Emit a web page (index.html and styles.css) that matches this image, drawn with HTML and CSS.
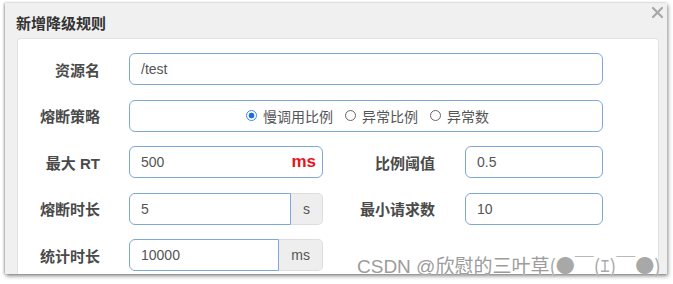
FILE: index.html
```html
<!DOCTYPE html>
<html lang="zh-CN">

<head>
    <meta charset="UTF-8">
    <meta name="viewport" content="width=device-width, initial-scale=1.0">
    <title>新增降级规则</title>
    <link rel="stylesheet" href="styles.css">
</head>

<body>
    <div class="modal">
        <div class="modal-header">
            <span class="modal-title">新增降级规则</span>
            <button class="close" type="button">
                <svg width="11" height="11" viewBox="0 0 11 11">
                    <path d="M1 1L10 10M10 1L1 10" stroke="#a8a8a8" stroke-width="2.2" stroke-linecap="square" fill="none" />
                </svg>
            </button>
        </div>
        <div class="modal-body">
            <div class="form-row">
                <label class="label">资源名</label>
                <input class="form-control field-full" value="/test">
            </div>
            <div class="form-row">
                <label class="label">熔断策略</label>
                <div class="form-control field-full radio-group">
                    <span class="radio checked"><i></i>慢调用比例</span>
                    <span class="radio"><i></i>异常比例</span>
                    <span class="radio"><i></i>异常数</span>
                </div>
            </div>
            <div class="form-row">
                <label class="label">最大 RT</label>
                <div class="form-control field-half with-suffix">
                    <input value="500">
                    <span class="suffix">ms</span>
                </div>
                <label class="label label-2">比例阈值</label>
                <input class="form-control field-small" value="0.5">
            </div>
            <div class="form-row">
                <label class="label">熔断时长</label>
                <div class="input-group field-half">
                    <input class="form-control" value="5">
                    <span class="addon">s</span>
                </div>
                <label class="label label-2">最小请求数</label>
                <input class="form-control field-small" value="10">
            </div>
            <div class="form-row">
                <label class="label">统计时长</label>
                <div class="input-group field-half">
                    <input class="form-control" value="10000">
                    <span class="addon">ms</span>
                </div>
            </div>
        </div>
    </div>
    <div class="watermark">CSDN @欣慰的三叶草<span class="kaomoji">(●￣(ｴ)￣●)</span></div>
</body>

</html>
```

FILE: styles.css
```css
* {
    margin: 0;
    padding: 0;
    box-sizing: border-box;
    font-family: 'Liberation Sans', 'Noto Sans CJK SC', sans-serif;
}

body {
    background: #fff;
    padding: 3px 0 0 5px;
    height: 284px;
    overflow: hidden;
}

.modal {
    width: 662px;
    height: 271px;
    background: #f0f0f0;
    box-shadow: 1px 2px 4px rgba(0, 0, 0, 0.45), -1px 0 2px rgba(0, 0, 0, 0.25);
    overflow: hidden;
    display: flex;
    flex-direction: column;
}

.modal-header {
    height: 35px;
    flex-shrink: 0;
    display: flex;
    align-items: flex-start;
    justify-content: space-between;
    padding: 13px 4px 0 11px;
}

.modal-title {
    font-size: 15px;
    font-weight: bold;
    color: #333;
    line-height: 16px;
}

.close {
    border: none;
    background: none;
    margin-top: -9px;
    line-height: 0;
}

.modal-body {
    flex: 1;
    margin: 0 8px 0 12px;
    background: #fff;
    border: 1px solid #e2e2e2;
    border-bottom: none;
    border-radius: 4px 4px 0 0;
    padding-top: 14px;
    display: flex;
    flex-direction: column;
    gap: 14.5px;
}

.form-row {
    display: flex;
    align-items: center;
    height: 32px;
}

.label {
    width: 82px;
    margin-right: 29px;
    text-align: right;
    font-size: 15px;
    font-weight: bold;
    color: #4a4a4a;
}

.label-2 {
    width: 112px;
    margin-right: 30px;
}

.form-control {
    height: 32px;
    border: 1px solid #7ea8d8;
    border-radius: 6px;
    padding: 0 11px;
    font-size: 14px;
    color: #555;
    background: #fff;
    outline: none;
}

.field-full {
    width: 474px;
}

.field-half {
    width: 194px;
}

.field-small {
    width: 138px;
}

.with-suffix {
    display: flex;
    align-items: center;
}

.with-suffix input {
    flex: 1;
    min-width: 0;
    border: none;
    outline: none;
    font-size: 14px;
    color: #555;
}

.suffix {
    color: #e8141c;
    font-size: 17px;
    font-weight: bold;
    margin-right: -5px;
}

.radio-group {
    display: flex;
    align-items: center;
    justify-content: center;
    gap: 12px;
    padding-left: 14px;
}

.radio {
    display: flex;
    align-items: center;
    gap: 6px;
    font-size: 14px;
    color: #555;
}

.radio i {
    width: 11px;
    height: 11px;
    border: 1px solid #666;
    border-radius: 50%;
    background: #fff;
}

.radio.checked i {
    border: 1.5px solid #3d86ea;
    background: radial-gradient(circle, #1a6fe0 0 2.6px, #fff 3.2px);
}

.input-group {
    display: flex;
    height: 32px;
}

.input-group .form-control {
    flex: 1;
    min-width: 0;
    border-radius: 6px 0 0 6px;
}

.addon {
    display: flex;
    align-items: center;
    padding: 0 12px;
    background: #eee;
    border: 1px solid #ddd;
    border-left: none;
    border-radius: 0 5px 5px 0;
    font-size: 14px;
    color: #555;
}

.watermark {
    position: absolute;
    left: 357px;
    top: 251px;
    font-size: 19px;
    color: #9c9c9c;
    white-space: nowrap;
    text-shadow: 0 0 1px #fff;
}

.kaomoji {
    font-family: 'Noto Sans CJK SC', sans-serif;
    font-size: 19px;
    color: #a8a8a8;
}
```
